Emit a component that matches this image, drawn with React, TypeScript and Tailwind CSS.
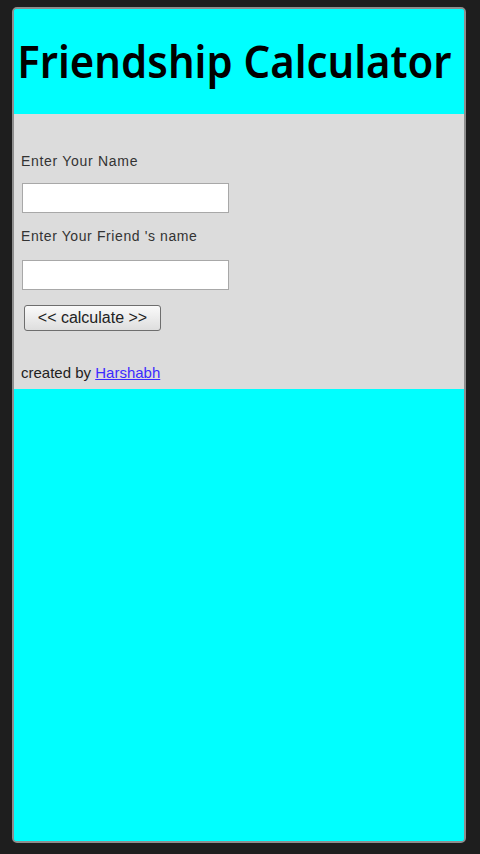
import React from "react";

export default function App() {
  return (
    <div className="w-[480px] h-[854px] bg-[#1e1e1e] pl-[12px] pr-[14px] pt-[7px] pb-[11px] flex">
      <div className="flex-1 flex flex-col border-2 border-[#8e8e8e] rounded-[5px] overflow-hidden bg-[#00ffff]">
        <div className="h-[105px] bg-[#00ffff] flex items-center justify-center">
          <h1
            className="text-[45px] font-semibold text-black leading-none mr-[10px] -mt-[2px] whitespace-nowrap scale-x-[0.93]"
            style={{ fontFamily: '"Noto Sans", sans-serif' }}
          >
            Friendship Calculator
          </h1>
        </div>
        <div className="bg-[#dcdcdc] h-[275px] flex flex-col pl-[7px] pt-[40px]" style={{ fontFamily: '"Liberation Sans", Arial, sans-serif' }}>
          <label className="text-[14px] text-[#333] leading-none tracking-[0.7px]">Enter Your Name</label>
          <input className="mt-[15px] ml-[1px] w-[207px] h-[30px] bg-white border border-[#a8a8a8] outline-none" />
          <label className="mt-[16px] text-[14px] text-[#333] leading-none tracking-[0.6px]">Enter Your Friend 's name</label>
          <input className="mt-[17px] ml-[1px] w-[207px] h-[30px] bg-white border border-[#a8a8a8] outline-none" />
          <button className="mt-[15px] ml-[3px] w-[137px] h-[26px] rounded-[3px] border border-[#6e6e6e] bg-gradient-to-b from-[#fafafa] to-[#dedede] text-[16px] text-[#222] leading-none">
            &lt;&lt; calculate &gt;&gt;
          </button>
          <p className="mt-[34px] text-[15px] text-[#222] leading-none">
            created by <a href="#" className="text-[#3b2bff] underline">Harshabh</a>
          </p>
        </div>
        <div className="flex-1 bg-[#00ffff]" />
      </div>
    </div>
  );
}
